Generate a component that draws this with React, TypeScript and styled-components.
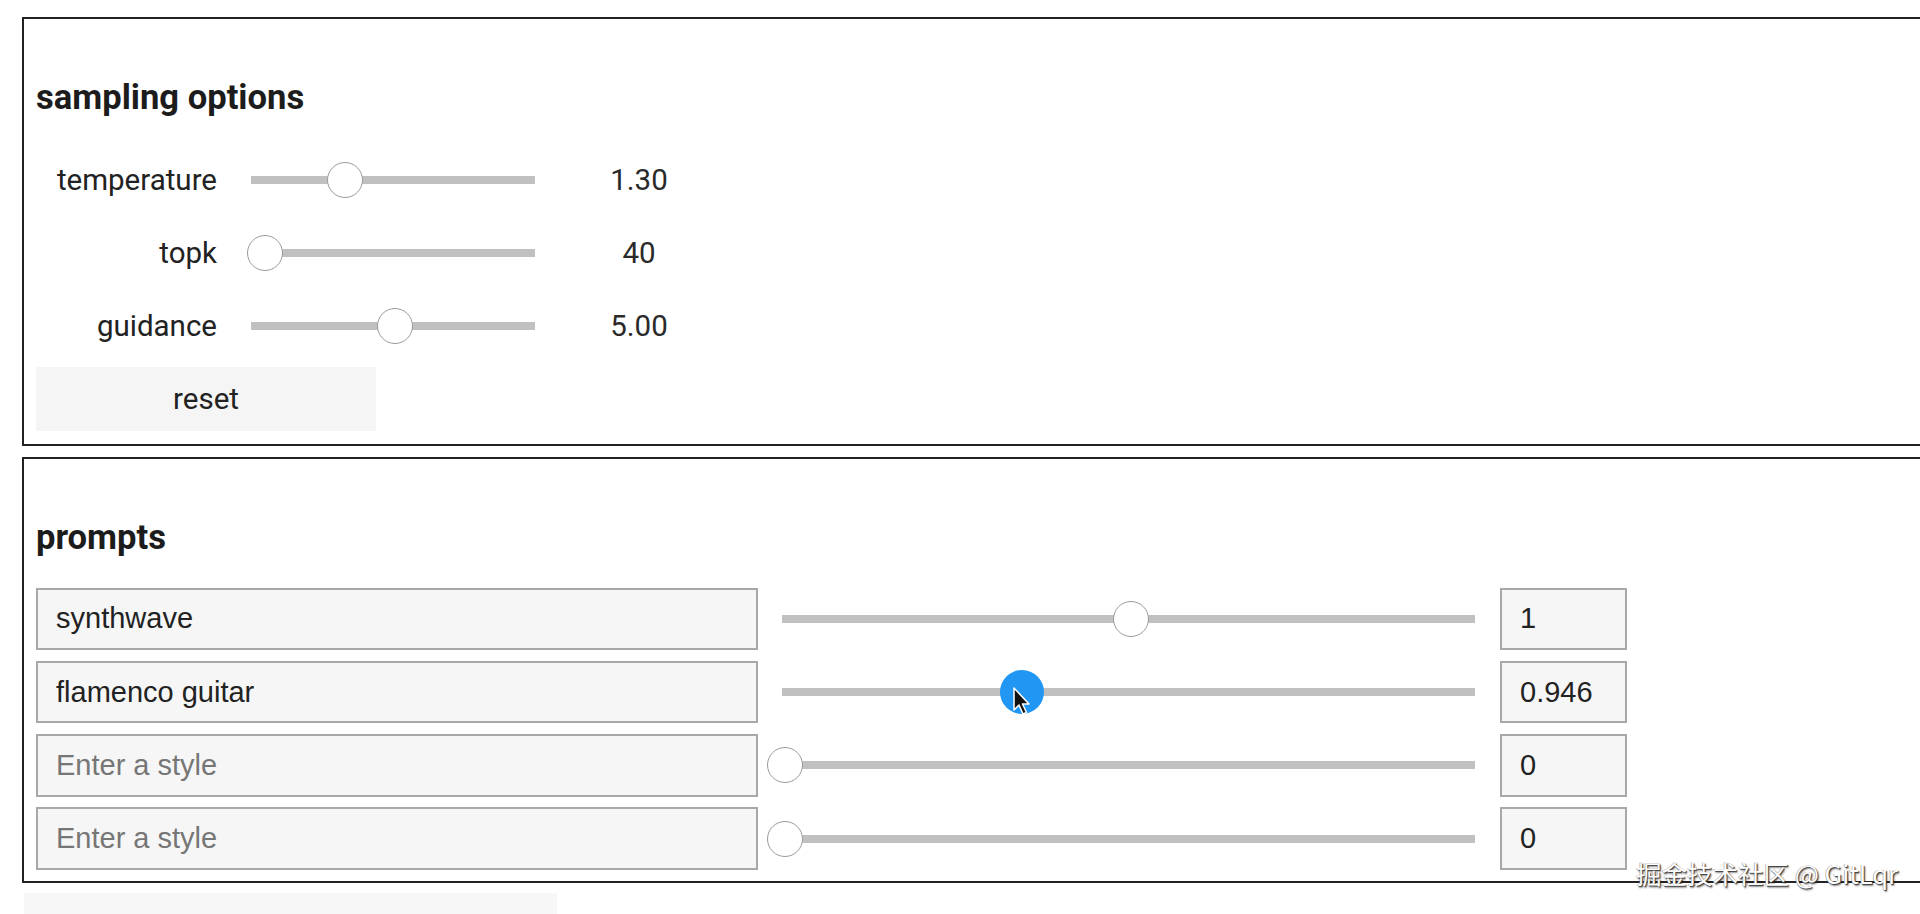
import styled, { createGlobalStyle } from 'styled-components'
import { FC } from 'react'

const GlobalStyle = createGlobalStyle`
  html, body {
    margin: 0;
    padding: 0;
    background: #ffffff;
    overflow: hidden;
  }
  * {
    box-sizing: border-box;
  }
`

const Page = styled.div`
  position: relative;
  width: 1920px;
  height: 914px;
  padding: 17px 0 0 22px;
  font-family: Roboto, 'Liberation Sans', sans-serif;
  color: #222222;
`

const Panel = styled.section<{ $bottom: number }>`
  width: 1940px;
  border: 2px solid #222222;
  padding: 58px 12px ${p => p.$bottom}px 12px;

  & + & {
    margin-top: 11px;
  }
`

const Title = styled.h3`
  margin: 0;
  font-size: 34.6px;
  line-height: 40px;
  font-weight: 700;
  color: #1c1c1c;
`

const SettingList = styled.div`
  margin-top: 26.5px;
  display: flex;
  flex-direction: column;
`

const SettingRow = styled.div`
  display: flex;
  align-items: center;
  height: 73px;
`

const Label = styled.label`
  width: 181px;
  text-align: right;
  font-size: 29.5px;
  color: #222222;
`

const Track = styled.div<{ $width: number; $gap: number }>`
  position: relative;
  width: ${p => p.$width}px;
  height: 8px;
  margin-left: ${p => p.$gap}px;
  background: #c0c0c0;
  flex-shrink: 0;
`

const Thumb = styled.div<{ $active?: boolean }>`
  position: absolute;
  top: 50%;
  width: ${p => (p.$active ? 44 : 36)}px;
  height: ${p => (p.$active ? 44 : 36)}px;
  border-radius: 50%;
  transform: translate(-50%, -50%);
  background: ${p => (p.$active ? '#2196f3' : '#ffffff')};
  border: ${p => (p.$active ? 'none' : '1.5px solid #9a9a9a')};
`

const Pointer = styled.svg`
  position: absolute;
  left: calc(50% - 9px);
  top: calc(50% - 5px);
  width: 18px;
  height: 29px;
  overflow: visible;
`

const Value = styled.span`
  width: 208px;
  text-align: center;
  font-size: 29.5px;
  color: #2a2a2a;
`

const ResetButton = styled.button`
  margin-top: 4px;
  width: 340px;
  height: 64px;
  border: none;
  background: #f5f5f5;
  font-family: Roboto, sans-serif;
  font-size: 29.5px;
  color: #222222;
`

const PromptList = styled.div`
  margin-top: 31px;
  display: flex;
  flex-direction: column;
  gap: 10.8px;
`

const PromptRow = styled.div`
  display: flex;
  align-items: center;
  height: 62.5px;
`

const TextBox = styled.input<{ $width: number }>`
  width: ${p => p.$width}px;
  height: 100%;
  flex-shrink: 0;
  padding: 0 18px;
  border: 2px solid #a8a8a8;
  background: #f6f6f6;
  font-family: 'Liberation Sans', Arial, sans-serif;
  font-size: 29px;
  color: #222222;
  outline: none;

  &::placeholder {
    color: #767676;
  }
`

const ValueBox = styled(TextBox)`
  margin-left: 25px;
`

const MoreButton = styled.div`
  margin-top: 10px;
  margin-left: 2px;
  width: 533px;
  height: 60px;
  background: #f7f7f7;
`

const Watermark = styled.div`
  position: absolute;
  right: 22px;
  top: 857px;
  font-family: 'Noto Sans CJK SC', 'Liberation Sans', sans-serif;
  font-size: 25.5px;
  line-height: 32px;
  color: #ffffff;
  text-shadow: 1px 1px 1px #3a3a3a, -0.5px -0.5px 0 #8a8a8a, 1.5px 1.5px 2px rgba(0, 0, 0, 0.4);
`

type Setting = { label: string; value: string; pos: number }
type Prompt = { text: string; weight: string; pos: number; active?: boolean }

const settings: Setting[] = [
    { label: 'temperature', value: '1.30', pos: 0.331 },
    { label: 'topk', value: '40', pos: 0.049 },
    { label: 'guidance', value: '5.00', pos: 0.507 }
]

const prompts: Prompt[] = [
    { text: 'synthwave', weight: '1', pos: 0.504 },
    { text: 'flamenco guitar', weight: '0.946', pos: 0.346, active: true },
    { text: '', weight: '0', pos: 0.004 },
    { text: '', weight: '0', pos: 0.004 }
]

const App: FC = () => {
    return (
        <Page>
            <GlobalStyle />
            <Panel $bottom={13}>
                <Title>sampling options</Title>
                <SettingList>
                    {settings.map(s => (
                        <SettingRow key={s.label}>
                            <Label>{s.label}</Label>
                            <Track $width={284} $gap={34}>
                                <Thumb style={{ left: `${s.pos * 100}%` }} />
                            </Track>
                            <Value>{s.value}</Value>
                        </SettingRow>
                    ))}
                </SettingList>
                <ResetButton type={'button'}>reset</ResetButton>
            </Panel>
            <Panel $bottom={11}>
                <Title>prompts</Title>
                <PromptList>
                    {prompts.map((p, i) => (
                        <PromptRow key={i}>
                            <TextBox
                                $width={722}
                                type={'text'}
                                placeholder={'Enter a style'}
                                defaultValue={p.text}
                            />
                            <Track $width={693} $gap={24}>
                                <Thumb $active={p.active} style={{ left: `${p.pos * 100}%` }}>
                                    {p.active && (
                                        <Pointer viewBox={'0 0 18 29'}>
                                            <path
                                                d={'M1 1 L1 23 L6 18 L10 27 L13.5 25.5 L9.5 17 L16 17 Z'}
                                                fill={'#111'}
                                                stroke={'#fff'}
                                                strokeWidth={1.5}
                                                strokeLinejoin={'round'}
                                            />
                                        </Pointer>
                                    )}
                                </Thumb>
                            </Track>
                            <ValueBox $width={127} type={'text'} readOnly value={p.weight} />
                        </PromptRow>
                    ))}
                </PromptList>
            </Panel>
            <MoreButton />
            <Watermark>掘金技术社区 @ GitLqr</Watermark>
        </Page>
    )
}

export default App
